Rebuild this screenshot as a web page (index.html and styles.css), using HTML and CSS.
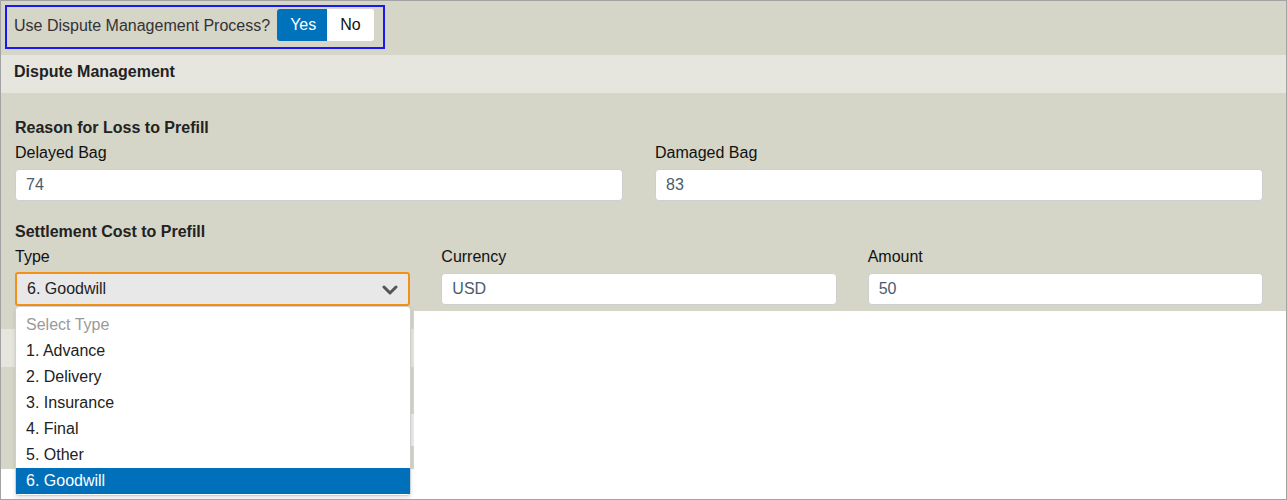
FILE: index.html
```html
<!DOCTYPE html>
<html lang="en">
<head>
    <meta charset="UTF-8" />
    <title>Dispute Management</title>
    <link rel="stylesheet" href="styles.css">
</head>
<body>
    <div class="page">
        <div class="top">
            <div class="toggle-row">
                <div class="toggle-box">
                    <span class="toggle-label">Use Dispute Management Process?</span>
                    <div class="toggle">
                        <button class="toggle-btn active">Yes</button>
                        <button class="toggle-btn">No</button>
                    </div>
                </div>
            </div>

            <div class="section-header">Dispute Management</div>

            <div class="section">
                <h3 class="group-title">Reason for Loss to Prefill</h3>
                <div class="row two">
                    <div class="field">
                        <label>Delayed Bag</label>
                        <input class="text-input" type="text" value="74">
                    </div>
                    <div class="field">
                        <label>Damaged Bag</label>
                        <input class="text-input" type="text" value="83">
                    </div>
                </div>

                <h3 class="group-title second">Settlement Cost to Prefill</h3>
                <div class="row three">
                    <div class="field select-field">
                        <label>Type</label>
                        <div class="select">
                            <span>6. Goodwill</span>
                            <svg class="chevron" width="16" height="10" viewBox="0 0 16 10">
                                <path d="M2 2 L8 8 L14 2" fill="none" stroke="#555" stroke-width="3" stroke-linecap="round" stroke-linejoin="round"/>
                            </svg>
                        </div>
                        <ul class="dropdown">
                            <li class="placeholder">Select Type</li>
                            <li>1. Advance</li>
                            <li>2. Delivery</li>
                            <li>3. Insurance</li>
                            <li>4. Final</li>
                            <li>5. Other</li>
                            <li class="selected">6. Goodwill</li>
                        </ul>
                    </div>
                    <div class="field">
                        <label>Currency</label>
                        <input class="text-input" type="text" value="USD">
                    </div>
                    <div class="field">
                        <label>Amount</label>
                        <input class="text-input" type="text" value="50">
                    </div>
                </div>
            </div>
        </div>

        <div class="bottom">
            <div class="hidden-panel">
                <div class="hidden-band"></div>
                <div class="hidden-input"></div>
            </div>
        </div>
    </div>
</body>
</html>
```

FILE: styles.css
```css
body {
    margin: 0;
    font-family: "Liberation Sans", Arial, sans-serif;
    font-size: 16px;
    color: #222;
}

.page {
    width: 1287px;
    height: 500px;
    box-sizing: border-box;
    border: 1px solid #a3a3a3;
    background-color: white;
    overflow: hidden;
}

.top {
    background-color: #d5d5c8;
    padding-bottom: 5px;
}

.toggle-row {
    padding: 4px 0 0 4px;
}

.toggle-box {
    display: inline-flex;
    align-items: center;
    height: 40px;
    padding: 0 9px 0 7px;
    border: 2px solid #1a1af0;
}

.toggle-label {
    color: #333;
    margin-right: 7px;
    margin-top: -3px;
}

.toggle {
    display: flex;
    margin-top: -4px;
}

.toggle-btn {
    font-family: inherit;
    font-size: 16px;
    height: 32px;
    border: none;
    background-color: white;
    color: #111;
    padding: 0 13px;
    border-radius: 0 3px 3px 0;
}

.toggle-btn.active {
    background-color: #0072bb;
    color: white;
    width: 50px;
    border-radius: 3px 0 0 3px;
}

.section-header {
    margin-top: 6px;
    height: 38px;
    line-height: 34px;
    padding-left: 13px;
    background-color: #e6e6de;
    font-weight: bold;
    color: #222;
}

.section {
    padding: 26px 23px 0 14px;
}

.group-title {
    margin: 0;
    font-size: 16px;
    line-height: 18px;
    color: #222;
}

.group-title.second {
    margin-top: 22px;
}

.row {
    display: grid;
    margin-top: 7px;
}

.row.two {
    grid-template-columns: 1fr 1fr;
    column-gap: 32px;
}

.row.three {
    grid-template-columns: 1fr 1fr 1fr;
    column-gap: 31px;
}

.field {
    display: flex;
    flex-direction: column;
}

.field label {
    line-height: 18px;
    color: #111;
    margin-bottom: 7px;
}

.text-input {
    height: 32px;
    box-sizing: border-box;
    border: 1px solid #cfcfcf;
    border-radius: 4px;
    background-color: white;
    padding: 0 10px;
    font-family: inherit;
    font-size: 16px;
    color: #4c5a6e;
}

.select-field {
    position: relative;
}

.select {
    height: 34px;
    box-sizing: border-box;
    margin-top: -1px;
    border: 2px solid #f29118;
    border-radius: 3px;
    background-color: #e8e8e8;
    padding: 0 10px;
    display: flex;
    align-items: center;
    justify-content: space-between;
    color: #222;
}

.chevron {
    margin-top: 2px;
}

.dropdown {
    position: absolute;
    top: 58px;
    left: 0;
    width: 396px;
    box-sizing: border-box;
    margin: 0;
    padding: 5px 0 1px;
    list-style: none;
    background-color: white;
    border: 1px solid #d0d0d0;
    border-radius: 4px;
    box-shadow: 0 2px 4px rgba(0,0,0,0.12);
    z-index: 5;
}

.dropdown li {
    height: 26px;
    line-height: 26px;
    padding-left: 10px;
    color: #222;
}

.dropdown li.placeholder {
    color: #9a9a9a;
}

.dropdown li.selected {
    background-color: #0070ba;
    color: white;
}

.bottom {
    height: 187px;
}

.hidden-panel {
    width: 413px;
    height: 158px;
    background-color: #d5d5c8;
    padding-top: 18px;
    box-sizing: border-box;
}

.hidden-band {
    height: 38px;
    background-color: #e6e6de;
}

.hidden-input {
    margin: 47px 0 0 15px;
    height: 32px;
    background-color: #ececec;
}
```
